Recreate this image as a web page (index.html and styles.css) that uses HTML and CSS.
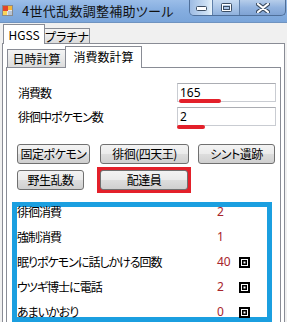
FILE: index.html
```html
<!DOCTYPE html>
<html lang="ja">
<head>
<meta charset="utf-8">
<title>4世代乱数調整補助ツール</title>
<link rel="stylesheet" href="styles.css">
</head>
<body>
<div class="window">
  <div class="titlebar">
    <svg class="appicon" width="11" height="11" viewBox="0 0 11 11">
      <rect x="0.5" y="0.5" width="10" height="10" fill="#e8e8e8" stroke="#8a8a8a"/>
      <rect x="1" y="1" width="5" height="5" fill="#e2452a"/>
      <rect x="6" y="1" width="4" height="4" fill="#f4b73a"/>
      <rect x="1" y="6" width="4" height="4" fill="#f7d35a"/>
      <rect x="6" y="6" width="4" height="4" fill="#b8c4d4"/>
    </svg>
    <span class="title">4世代乱数調整補助ツール</span>
    <div class="caption">
      <div class="cbtn cmin">
        <svg width="11" height="6" viewBox="0 0 11 6"><rect x="0.5" y="0.5" width="10" height="4" rx="1" fill="#fff" stroke="#3b4d63"/></svg>
      </div>
      <div class="cbtn cmax">
        <svg width="11" height="9" viewBox="0 0 11 9"><rect x="0.5" y="0.5" width="10" height="8" rx="1" fill="none" stroke="#3b4d63"/><rect x="1.5" y="1.5" width="8" height="6" fill="none" stroke="#fff" stroke-width="1"/><rect x="2.5" y="3.5" width="6" height="3" fill="none" stroke="#3b4d63"/></svg>
      </div>
      <div class="cbtn cclose">
        <svg width="14" height="10" viewBox="0 0 14 10"><path d="M2 1 L12 9 M12 1 L2 9" stroke="#3b4d63" stroke-width="4.2" stroke-linecap="round"/><path d="M2 1 L12 9 M12 1 L2 9" stroke="#fff" stroke-width="2.2" stroke-linecap="round"/></svg>
      </div>
    </div>
  </div>

  <div class="client">
    <div class="tabstrip outer-strip">
      <div class="tab sel t-hgss">HGSS</div>
      <div class="tab t-pt">プラチナ</div>
    </div>
    <div class="page outer-page">
      <div class="tabstrip inner-strip">
        <div class="tab t-date">日時計算</div>
        <div class="tab sel t-cons">消費数計算</div>
      </div>
      <div class="page inner-page">
        <div class="form">
          <span class="lbl">消費数</span>
          <div class="field"><span>165</span><i class="uline u1"></i></div>
          <span class="lbl">徘徊中ポケモン数</span>
          <div class="field"><span>2</span><i class="uline u2"></i></div>
        </div>
        <div class="btnrow">
          <button class="btn w73">固定ポケモン</button>
          <button class="btn w89">徘徊(四天王)</button>
          <button class="btn w77">シント遺跡</button>
        </div>
        <div class="btnrow">
          <button class="btn w67">野生乱数</button>
          <span class="hlbox"><button class="btn w88">配達員</button></span>
        </div>
        <div class="results">
          <div class="row"><span>徘徊消費</span><span class="val">2</span><span></span></div>
          <div class="row"><span>強制消費</span><span class="val">1</span><span></span></div>
          <div class="row"><span>眠りポケモンに話しかける回数</span><span class="val">40</span><svg class="sq" width="11" height="11" viewBox="0 0 11 11"><rect x="1" y="1" width="9" height="9" fill="#fff" stroke="#000" stroke-width="2"/><rect x="3.75" y="3.75" width="3.5" height="3.5" fill="none" stroke="#000" stroke-width="1.5"/></svg></div>
          <div class="row"><span>ウツギ博士に電話</span><span class="val">2</span><svg class="sq" width="11" height="11" viewBox="0 0 11 11"><rect x="1" y="1" width="9" height="9" fill="#fff" stroke="#000" stroke-width="2"/><rect x="3.75" y="3.75" width="3.5" height="3.5" fill="none" stroke="#000" stroke-width="1.5"/></svg></div>
          <div class="row"><span>あまいかおり</span><span class="val">0</span><svg class="sq" width="11" height="11" viewBox="0 0 11 11"><rect x="1" y="1" width="9" height="9" fill="#fff" stroke="#000" stroke-width="2"/><rect x="3.75" y="3.75" width="3.5" height="3.5" fill="none" stroke="#000" stroke-width="1.5"/></svg></div>
        </div>
      </div>
    </div>
  </div>
</div>
</body>
</html>
```

FILE: styles.css
```css
html, body {
  margin: 0;
  padding: 0;
}
body {
  width: 287px;
  height: 322px;
  overflow: hidden;
  background: #f0f0f0;
  font-family: "Noto Sans CJK JP", "Noto Sans", sans-serif;
  font-size: 12px;
  color: #000;
  font-feature-settings: "palt";
}
.window {
  width: 287px;
  height: 322px;
  display: flex;
  flex-direction: column;
}

/* title bar */
.titlebar {
  height: 23px;
  flex: none;
  display: flex;
  align-items: flex-start;
  background: linear-gradient(to bottom, #9bbde8 0%, #86aee0 45%, #7aa5da 100%);
  border-bottom: 1px solid #6f93c0;
  box-sizing: border-box;
}
.appicon {
  margin: 5px 0 0 2px;
  flex: none;
}
.title {
  margin-left: 9px;
  margin-top: 2px;
  font-size: 13px;
  line-height: 17px;
  color: #111;
  letter-spacing: 0.3px;
}
.caption {
  margin-left: auto;
  margin-right: 1px;
  display: flex;
  height: 15px;
  border: 1px solid #4f6f99;
  border-top: none;
  border-radius: 0 0 5px 5px;
  overflow: hidden;
  background: linear-gradient(to bottom, #b6cdea 0%, #92b3df 50%, #7fa3d4 100%);
}
.cbtn {
  display: flex;
  align-items: center;
  justify-content: center;
  height: 15px;
  border-left: 1px solid #5f80aa;
  box-sizing: border-box;
}
.cmin {
  width: 22px;
  border-left: none;
  align-items: flex-end;
  padding-bottom: 3px;
  background: linear-gradient(to right, #9dbbe3 0%, #cfe2f5 80%, #e9f4fb 100%);
}
.cmax { width: 27px; background: linear-gradient(to bottom, #c7dbf2, #8fb1dd); }
.cclose { width: 46px; }

/* client */
.client {
  flex: 1;
  padding: 1px 2px 0 2px;
  display: flex;
  flex-direction: column;
  min-height: 0;
}
.tabstrip {
  display: flex;
  align-items: flex-end;
  flex: none;
  position: relative;
  z-index: 1;
}
.tab {
  box-sizing: border-box;
  border: 1px solid #898c95;
  border-bottom: none;
  background: linear-gradient(to bottom, #f4f4f4 0%, #e9e9e9 50%, #dcdcdc 100%);
  display: flex;
  align-items: center;
  justify-content: center;
  white-space: nowrap;
}
.tab.sel {
  background: #fff;
  margin-bottom: -1px;
}
.outer-strip {
  height: 19px;
  padding-left: 1px;
}
.t-hgss { width: 42px; height: 20px; padding-bottom: 1px; }
.t-pt { width: 46px; height: 15px; margin-left: -1px; }

.page {
  border: 1px solid #898c95;
  background: #fff;
  box-sizing: border-box;
}
.outer-page {
  flex: 1;
  padding: 2px 3px 0 3px;
  display: flex;
  flex-direction: column;
}
.inner-strip {
  height: 21px;
  padding-left: 1px;
}
.t-date { width: 59px; height: 18px; }
.t-cons { width: 77px; height: 22px; margin-left: -1px; padding-bottom: 2px; }

.inner-page {
  flex: 1;
  padding: 15px 0 0 0;
}

/* form */
.form {
  display: grid;
  grid-template-columns: 159px 99px;
  row-gap: 5px;
  padding-left: 11px;
  align-items: center;
}
.lbl { line-height: 19px; letter-spacing: -1px; }
.field {
  position: relative;
  height: 19px;
  box-sizing: border-box;
  border: 1px solid #c9ccd2;
  border-top-color: #abadb3;
  padding-left: 2px;
  line-height: 17px;
  font-family: "Noto Sans", "Noto Sans CJK JP", sans-serif;
}
.uline {
  position: absolute;
  height: 4px;
  border-radius: 2px;
  background: #e3202a;
}
.u1 { left: 1px; top: 15px; width: 42px; }
.u2 { left: -1px; top: 17px; width: 28px; }

/* buttons */
.btnrow {
  display: flex;
  align-items: flex-start;
  gap: 10px;
  padding-left: 10px;
  margin-top: 6px;
}
.form + .btnrow { margin-top: 18px; }
.btn {
  height: 20px;
  box-sizing: border-box;
  border: 1px solid #707070;
  border-radius: 3px;
  background: linear-gradient(to bottom, #f3f3f3 0%, #ebebeb 48%, #dddddd 52%, #cfcfcf 100%);
  font-family: inherit;
  font-size: 12px;
  font-feature-settings: "palt";
  letter-spacing: -0.5px;
  color: #000;
  padding: 0;
  line-height: 18px;
  white-space: nowrap;
  display: block;
}
.w73 { width: 73px; }
.w89 { width: 89px; }
.w77 { width: 77px; margin-left: -1px; }
.w67 { width: 67px; }
.w88 { width: 88px; margin: -1px; }
.hlbox {
  display: block;
  border: 4px solid #e3202a;
  margin: -3px 0 -3px 3px;
}

/* results */
.results {
  margin: 12px 0 0 5px;
  width: 260px;
  height: 120px;
  box-sizing: border-box;
  box-shadow: inset 0 0 0 5px #1b9fe0;
  padding-left: 5px;
}
.row {
  display: grid;
  grid-template-columns: 200px 22px 11px;
  height: 25px;
  align-items: start;
  line-height: 20px;
  letter-spacing: -1px;
}
.val {
  color: #a8242c;
  font-family: "Noto Sans", sans-serif;
  letter-spacing: 0;
}
.sq {
  display: block;
  margin-top: 5px;
}
```
